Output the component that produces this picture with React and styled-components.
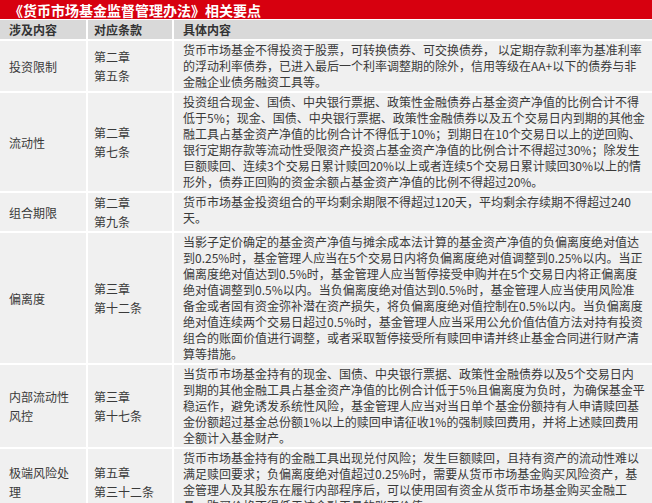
import React from "react";
import styled, { createGlobalStyle } from "styled-components";

const rows = [
  {
    topic: ["投资限制"],
    clause: ["第二章", "第五条"],
    lines: [
      "货币市场基金不得投资于股票，可转换债券、可交换债券， 以定期存款利率为基准利率",
      "的浮动利率债券，已进入最后一个利率调整期的除外，信用等级在AA+以下的债券与非",
      "金融企业债务融资工具等。",
    ],
  },
  {
    topic: ["流动性"],
    clause: ["第二章", "第七条"],
    lines: [
      "投资组合现金、国债、中央银行票据、政策性金融债券占基金资产净值的比例合计不得",
      "低于5%；现金、国债、中央银行票据、政策性金融债券以及五个交易日内到期的其他金",
      "融工具占基金资产净值的比例合计不得低于10%；到期日在10个交易日以上的逆回购、",
      "银行定期存款等流动性受限资产投资占基金资产净值的比例合计不得超过30%；除发生",
      "巨额赎回、连续3个交易日累计赎回20%以上或者连续5个交易日累计赎回30%以上的情",
      "形外，债券正回购的资金余额占基金资产净值的比例不得超过20%。",
    ],
  },
  {
    topic: ["组合期限"],
    clause: ["第二章", "第九条"],
    lines: [
      "货币市场基金投资组合的平均剩余期限不得超过120天，平均剩余存续期不得超过240",
      "天。",
    ],
  },
  {
    topic: ["偏离度"],
    clause: ["第三章", "第十二条"],
    lines: [
      "当影子定价确定的基金资产净值与摊余成本法计算的基金资产净值的负偏离度绝对值达",
      "到0.25%时，基金管理人应当在5个交易日内将负偏离度绝对值调整到0.25%以内。当正",
      "偏离度绝对值达到0.5%时，基金管理人应当暂停接受申购并在5个交易日内将正偏离度",
      "绝对值调整到0.5%以内。当负偏离度绝对值达到0.5%时，基金管理人应当使用风险准",
      "备金或者固有资金弥补潜在资产损失，将负偏离度绝对值控制在0.5%以内。当负偏离度",
      "绝对值连续两个交易日超过0.5%时，基金管理人应当采用公允价值估值方法对持有投资",
      "组合的账面价值进行调整，或者采取暂停接受所有赎回申请并终止基金合同进行财产清",
      "算等措施。",
    ],
  },
  {
    topic: ["内部流动性", "风控"],
    clause: ["第三章", "第十七条"],
    lines: [
      "当货币市场基金持有的现金、国债、中央银行票据、政策性金融债券以及5个交易日内",
      "到期的其他金融工具占基金资产净值的比例合计低于5%且偏离度为负时，为确保基金平",
      "稳运作，避免诱发系统性风险，基金管理人应当对当日单个基金份额持有人申请赎回基",
      "金份额超过基金总份额1%以上的赎回申请征收1%的强制赎回费用，并将上述赎回费用",
      "全额计入基金财产。",
    ],
  },
  {
    topic: ["极端风险处", "理"],
    clause: ["第五章", "第三十二条"],
    lines: [
      "货币市场基金持有的金融工具出现兑付风险；发生巨额赎回，且持有资产的流动性难以",
      "满足赎回要求；负偏离度绝对值超过0.25%时，需要从货币市场基金购买风险资产，基",
      "金管理人及其股东在履行内部程序后，可以使用固有资金从货币市场基金购买金融工",
      "具，购买价格不得低于该金融工具的账面价值。",
    ],
  },
];

function App() {
  return (
    <>
      <GlobalStyle />
      <Title>《货币市场基金监督管理办法》相关要点</Title>
      <Table>
        <HeadCell $pad={9}>涉及内容</HeadCell>
        <HeadCell $pad={6}>对应条款</HeadCell>
        <HeadCell $pad={9}>具体内容</HeadCell>
        {rows.map((row, i) => (
          <React.Fragment key={i}>
            <SideCell $pad={9}>
              {row.topic.map((t) => (
                <span key={t}>{t}</span>
              ))}
            </SideCell>
            <SideCell $pad={6}>
              {row.clause.map((t) => (
                <span key={t}>{t}</span>
              ))}
            </SideCell>
            <TextCell>
              {row.lines.map((l, j) => (
                <Line key={j}>{l}</Line>
              ))}
            </TextCell>
          </React.Fragment>
        ))}
      </Table>
    </>
  );
}

export default App;

const GlobalStyle = createGlobalStyle`
  body {
    margin: 0;
    background: #ffffff;
    font-family: "Noto Sans CJK SC", "Liberation Sans", sans-serif;
    color: #3a3a3a;
  }
`;

const Title = styled.div`
  height: 19px;
  margin-bottom: 1px;
  padding-left: 9px;
  display: flex;
  align-items: center;
  background-color: #d7000f;
  color: #ffffff;
  font-size: 14px;
  font-weight: 700;
  white-space: nowrap;
`;

const Table = styled.div`
  display: grid;
  grid-template-columns: 86px 84px 1fr;
  column-gap: 2px;
  row-gap: 2px;
`;

const HeadCell = styled.div`
  height: 19px;
  padding-left: ${(p) => p.$pad}px;
  display: flex;
  align-items: center;
  background-color: #d9d9d9;
  color: #333333;
  font-size: 12px;
  font-weight: 700;
`;

const SideCell = styled.div`
  padding-left: ${(p) => p.$pad}px;
  display: flex;
  flex-direction: column;
  justify-content: center;
  background-color: #f0f0f0;
  font-size: 12px;
  line-height: 19px;
  white-space: nowrap;
`;

const TextCell = styled.div`
  padding: 1px 0 1px 9px;
  background-color: #f0f0f0;
  font-size: 12px;
  line-height: 16px;
`;

const Line = styled.div`
  white-space: nowrap;
`;
